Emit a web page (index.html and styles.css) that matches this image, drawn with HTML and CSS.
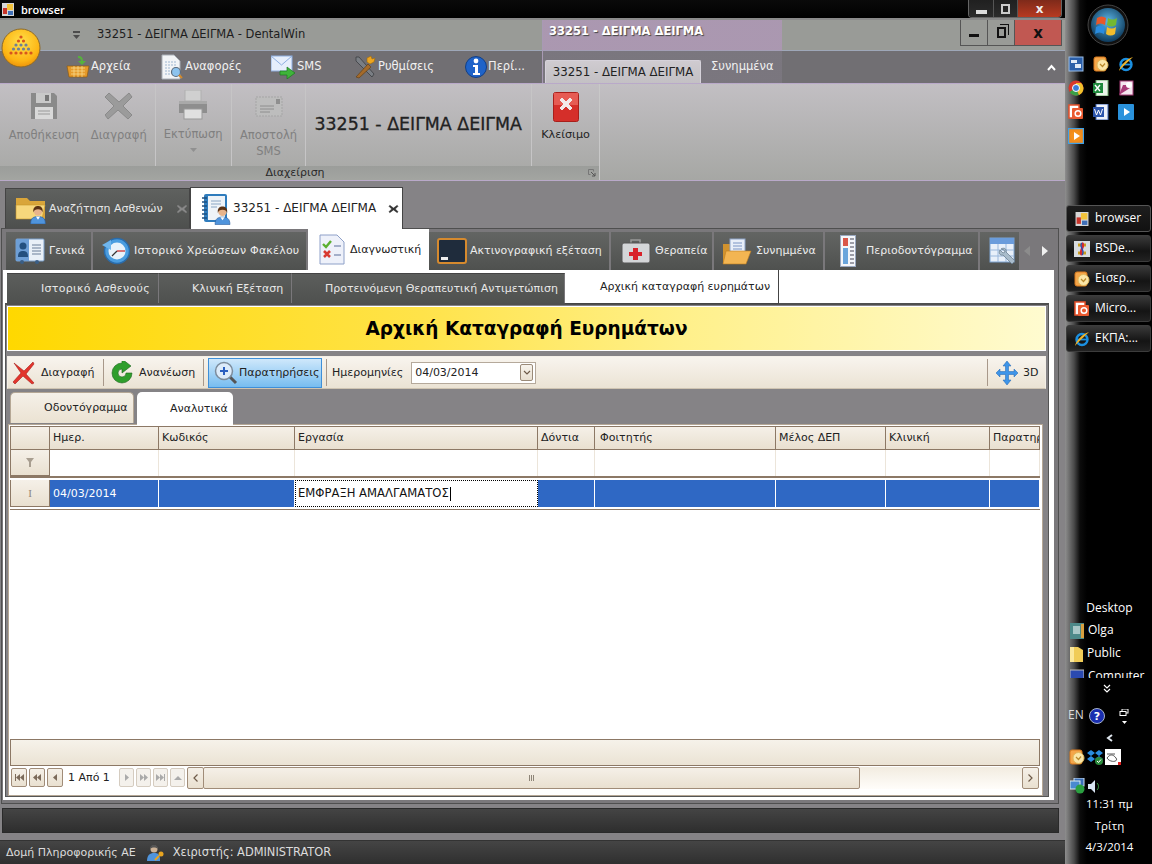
FILE: index.html
```html
<!DOCTYPE html>
<html lang="el">
<head>
<meta charset="utf-8">
<title>browser</title>
<link rel="stylesheet" href="styles.css">
</head>
<body>
<svg class="defs" width="0" height="0">
  <symbol id="person" viewBox="0 0 16 18"><path d="M1 18c0-6 3-7 7-7s7 1 7 7z" fill="#4f94dc" stroke="#2a5f9f" stroke-width=".6"/><path d="M6 11l2 3 2-3z" fill="#fff"/><circle cx="8" cy="6" r="4" fill="#e8b48c"/><path d="M3.600 7C3 2 6 1 8 1s5 1 4.400 6c-.6-2-2-3-4.400-3S4.200 5 3.600 7z" fill="#5a3214"/></symbol>
  <symbol id="outlook" viewBox="0 0 16 16"><rect x="1" y="1" width="12" height="14" rx="2" fill="#f5a64a" stroke="#d87b1e"/><circle cx="9.500" cy="9" r="5.500" fill="#fbe6a8" stroke="#e0b95c"/><path d="M7 8l2.500 2.500L12 7.500" fill="none" stroke="#b98a2c" stroke-width="1.200"/></symbol>
  <symbol id="ie" viewBox="0 0 16 16"><ellipse cx="8" cy="8.500" rx="5.500" ry="5.500" fill="none" stroke="#1b8fe0" stroke-width="2.400"/><path d="M3 8.500h10" stroke="#1b8fe0" stroke-width="1.800"/><path d="M1 15C2 10 8 3 15 1c-3 3-9 8-14 14z" fill="#f0b429"/></symbol>
  <symbol id="ppt" viewBox="0 0 16 16"><rect x="1" y="1" width="10" height="13" fill="#fff" stroke="#e8502a" stroke-width="1.500"/><rect x="4" y="4" width="11" height="11" rx="1" fill="#ea5a30"/><circle cx="10" cy="9.500" r="2.800" fill="none" stroke="#fff" stroke-width="1.500"/></symbol>
  <symbol id="gearlink" viewBox="0 0 16 16"><rect x="1" y="1" width="14" height="14" fill="#2a5ea8" stroke="#9cc0ea"/><rect x="3" y="4" width="6" height="3" fill="#dfe8f5"/><rect x="7" y="8" width="6" height="4" fill="#dfe8f5"/></symbol>
</svg>
<div class="screen">
  <div class="app">
    <svg class="logo" width="40" height="40" viewBox="0 0 40 40"><defs><radialGradient id="lg" cx=".5" cy=".35" r=".7"><stop offset="0" stop-color="#ffe04a"/><stop offset=".7" stop-color="#fdb514"/><stop offset="1" stop-color="#e98a08"/></radialGradient></defs><circle cx="20" cy="20" r="19" fill="url(#lg)" stroke="#8c6a2a"/><g fill="#d8541c"><circle cx="20" cy="9" r="1.600"/><circle cx="17.500" cy="13" r="1.600"/><circle cx="22.500" cy="13" r="1.600"/></g><g fill="#6f7f96"><circle cx="15" cy="17" r="1.600"/><circle cx="20" cy="17" r="1.600"/><circle cx="25" cy="17" r="1.600"/><circle cx="12.500" cy="21" r="1.600"/><circle cx="17.500" cy="21" r="1.600"/><circle cx="22.500" cy="21" r="1.600"/><circle cx="27.500" cy="21" r="1.600"/></g><g fill="#d8541c"><circle cx="10" cy="25" r="1.600"/><circle cx="15" cy="25" r="1.600"/><circle cx="20" cy="25" r="1.600"/><circle cx="25" cy="25" r="1.600"/><circle cx="30" cy="25" r="1.600"/></g></svg>
    <div class="aero">
      <svg class="winicon" width="12" height="13" viewBox="0 0 12 13"><rect width="12" height="13" fill="#d6d6d6"/><rect x="1" y="5" width="4" height="6" fill="#c8342a"/><rect x="5" y="1" width="6" height="6" fill="#f2c23a"/><rect x="6" y="8" width="5" height="4" fill="#3f6fb8"/></svg>
      <span class="aero-title">browser</span>
      <div class="aero-btns">
        <span class="ab ab-min"><i></i></span><span class="ab ab-max"><i></i></span><span class="ab ab-close">x</span>
      </div>
    </div>
    <div class="qat">
      <svg class="qat-drop" width="9" height="10" viewBox="0 0 9 10"><rect x="1" y="1" width="7" height="2" fill="#4c4c4c"/><path d="M1 5h7L4.500 9z" fill="#4c4c4c"/></svg>
      <span class="qat-title">33251 - ΔΕΙΓΜΑ ΔΕΙΓΜΑ - DentalWin</span>
      <div class="win-btns">
        <span class="wb"><i class="wb-min"></i></span>
        <span class="wb"><i class="wb-max"></i></span>
        <span class="wb wb-close">x</span>
      </div>
    </div>
    <div class="menu">
      <div class="mt mt-a">
        <svg width="24" height="24" viewBox="0 0 24 24"><path d="M12 1c4 0 5 2 5 5h3l-4 4-4-4h3c0-2-1-3-3-3z" fill="#57b13d"/><path d="M1 11h22l-2 11H3z" fill="#e59a2a" stroke="#8f5c12" stroke-width=".7"/><path d="M5 13h14M5 16h14M5 19h14M8 11v11M12 11v11M16 11v11" stroke="#f8d98c" stroke-width=".8"/></svg>
        <span>Αρχεία</span>
      </div>
      <div class="mt mt-b">
        <svg width="24" height="26" viewBox="0 0 24 26"><path d="M2 1h12l6 6v18H2z" fill="#f2f4f6" stroke="#aab0b8"/><path d="M5 8h11M5 11h11M5 14h6M5 17h6M5 20h6" stroke="#9db5cf" stroke-width="1.200" stroke-dasharray="2 1"/><circle cx="16" cy="18" r="4.500" fill="#8cc3ee" stroke="#5c6c7c" stroke-width="1.200"/><path d="M19 21l3 3" stroke="#d48a2a" stroke-width="2"/></svg>
        <span>Αναφορές</span>
      </div>
      <div class="mt mt-c">
        <svg width="25" height="24" viewBox="0 0 25 24"><rect x="0" y="1" width="21" height="15" fill="#e6eefb" stroke="#8eaee0"/><path d="M0 1l10.500 9L21 1" fill="none" stroke="#8eaee0"/><path d="M9 16h7v-4l8 6-8 6v-4H9z" fill="#3fb43a" stroke="#1d7a20" stroke-width=".7"/></svg>
        <span>SMS</span>
      </div>
      <div class="mt mt-d">
        <svg width="24" height="24" viewBox="0 0 24 24"><path d="M3 2l3 0 15 17-2 3L3 6z" fill="#7a7e84" stroke="#33363a" stroke-width=".7"/><path d="M3 22L15 9l3 3L6 23z" fill="#a46a2a" stroke="#5e3a10" stroke-width=".6"/><path d="M14 3l4-2 1 3 3-1-1 4-4 2-3-2z" fill="#eda520" stroke="#9c6a10" stroke-width=".6"/></svg>
        <span>Ρυθμίσεις</span>
      </div>
      <div class="mt mt-e">
        <svg width="22" height="24" viewBox="0 0 22 24"><circle cx="11" cy="12" r="10.500" fill="#1f63c8" stroke="#123f86"/><circle cx="11" cy="6" r="2.400" fill="#fff"/><path d="M8 10h5v8h2v2H8v-2h2v-6H8z" fill="#fff"/></svg>
        <span>Περί...</span>
      </div>
      <div class="mt-active">33251 - ΔΕΙΓΜΑ ΔΕΙΓΜΑ</div>
      <div class="mt-att">Συνημμένα</div>
      <svg class="collapse" width="9" height="7" viewBox="0 0 9 7"><path d="M1 6l3.500-4L8 6" fill="none" stroke="#fff" stroke-width="2"/></svg>
    </div>
    <div class="context-tab"><span>33251 - ΔΕΙΓΜΑ ΔΕΙΓΜΑ</span></div>
    <div class="ribbon">
      <div class="rb-group">
        <div class="rb-items">
          <div class="rb rb-save">
            <svg width="28" height="28" viewBox="0 0 28 28"><path d="M1 1h23l3 3v23H1z" fill="#8a8a8a"/><rect x="6" y="1" width="15" height="10" fill="#c9c9c9"/><rect x="15" y="3" width="4" height="6" fill="#777"/><rect x="5" y="15" width="18" height="12" fill="#d9d9d9"/><path d="M8 19h12M8 22h12" stroke="#999"/></svg>
            <span>Αποθήκευση</span>
          </div>
          <div class="rb rb-del sep">
            <svg width="28" height="28" viewBox="0 0 28 28"><path d="M4 1l10 9L24 1l3 4-9 9 9 9-4 4-10-9-10 9-3-4 9-9-9-9z" fill="#9b9b9b" stroke="#8a8a8a"/></svg>
            <span>Διαγραφή</span>
          </div>
          <div class="rb rb-print sep">
            <svg width="30" height="30" viewBox="0 0 30 30"><rect x="7" y="0" width="16" height="11" fill="#d0d0d0" stroke="#b0b0b0"/><path d="M1 11h28v12H1z" fill="#8e8e8e"/><rect x="1" y="11" width="28" height="3" fill="#a9a9a9"/><rect x="6" y="19" width="18" height="10" fill="#e0e0e0" stroke="#999"/></svg>
            <span>Εκτύπωση</span>
            <svg class="drop" width="7" height="4" viewBox="0 0 7 4"><path d="M0 0h7L3.500 4z" fill="#909090"/></svg>
          </div>
          <div class="rb rb-sms sep">
            <svg width="28" height="28" viewBox="0 0 28 28"><rect x="1" y="5" width="26" height="19" fill="#bdbdbd" stroke="#a5a5a5" stroke-dasharray="2 1"/><rect x="21" y="7" width="4" height="5" fill="#8f8f8f"/><path d="M5 14h14M5 17h14M5 20h10" stroke="#8e8e8e"/></svg>
            <span>Αποστολή<br>SMS</span>
          </div>
          <div class="rb-name sep">33251 - ΔΕΙΓΜΑ ΔΕΙΓΜΑ</div>
          <div class="rb rb-close sep">
            <svg width="26" height="30" viewBox="0 0 26 30"><rect x=".5" y=".5" width="25" height="29" rx="2" fill="#d52f2a" stroke="#a81f1b"/><rect x="1" y="1" width="24" height="12" fill="#e65b53"/><path d="M7 8l2-2 4 4 4-4 2 2-4 4 4 4-2 2-4-4-4 4-2-2 4-4z" fill="#f2eaea" stroke="#f2eaea"/></svg>
            <span>Κλείσιμο</span>
          </div>
        </div>
        <div class="rb-foot">
          <span>Διαχείριση</span>
          <svg class="launcher" width="8" height="8" viewBox="0 0 8 8"><path d="M.5.500h5v2M.5.500v5h2" fill="none" stroke="#777"/><path d="M3 3l4 4M7 4v3H4" fill="none" stroke="#555"/></svg>
        </div>
      </div>
    </div>
    <div class="work">
      <div class="doc-tabs">
        <div class="dt dt-search">
          <svg class="ic-folderp" width="32" height="30" viewBox="0 0 32 30"><path d="M1 4h11l3 3h15v18H1z" fill="#d9a53a"/><path d="M1 11h29l-3 14H1z" fill="#f7d77c" stroke="#c8962a" stroke-width=".6"/><use href="#person" x="14" y="11" width="18" height="19"/></svg>
          <span>Αναζήτηση Ασθενών</span>
          <svg class="dt-x" width="12" height="10" viewBox="0 0 12 10"><path d="M2 1l4 3 4-3 1 1-3 3 3 3-1 1-4-3-4 3-1-1 3-3-3-3z" fill="#8a8a8a" stroke="#777" stroke-width=".5"/></svg>
        </div>
        <div class="dt dt-active">
          <svg class="ic-bookp" width="30" height="32" viewBox="0 0 30 32"><rect x="3" y="1" width="23" height="28" rx="2" fill="#2f7cbd"/><rect x="7" y="3" width="17" height="24" fill="#eef3f8"/><path d="M10 8h10M10 11h10M10 14h6" stroke="#8aa6c4"/><path d="M1 5h5M1 9h5M1 13h5M1 17h5M1 21h5M1 25h5" stroke="#1c4f80" stroke-width="1.400"/><use href="#person" x="13" y="12" width="17" height="20"/></svg>
          <span>33251 - ΔΕΙΓΜΑ ΔΕΙΓΜΑ</span>
          <svg class="dt-x" width="11" height="10" viewBox="0 0 12 10"><path d="M2 1l4 3 4-3 1 1-3 3 3 3-1 1-4-3-4 3-1-1 3-3-3-3z" fill="#333" stroke="#333" stroke-width=".5"/></svg>
        </div>
      </div>
      <div class="doc-panel">
        <div class="page-tabs">
          <div class="pt pt-1">
            <svg width="30" height="28" viewBox="0 0 30 28"><rect x="1" y="2" width="28" height="22" rx="1" fill="#e9f0f8" stroke="#7aa0cc"/><rect x="1" y="2" width="13" height="22" fill="#6e9fd6"/><circle cx="8" cy="9" r="3.500" fill="#24507f"/><path d="M3 20c0-5 2-6 5-6s5 1 5 6z" fill="#24507f"/><path d="M17 8h9M17 11h9M17 14h9M17 17h9" stroke="#6a7f99"/><circle cx="7" cy="25" r="2" fill="#3a5e85"/><circle cx="22" cy="25" r="2" fill="#3a5e85"/></svg>
            <span>Γενικά</span>
          </div>
          <div class="pt pt-2">
            <svg width="28" height="30" viewBox="0 0 28 30"><circle cx="15" cy="15" r="12.500" fill="#4a9de0" stroke="#2a6cab" stroke-width="1.500"/><circle cx="15" cy="15" r="8.500" fill="#e8f2fa"/><path d="M15 15l-5 5" stroke="#333" stroke-width="1.200"/><path d="M15 15h8" stroke="#c22" stroke-width="1.200"/><path d="M0 9l9-5v10z" fill="#6fb6ee"/></svg>
            <span>Ιστορικό Χρεώσεων Φακέλου</span>
          </div>
          <div class="pt pt-3">
            <svg width="26" height="31" viewBox="0 0 26 31"><path d="M1 1h17l7 7v22H1z" fill="#eef1fa" stroke="#8ea0c8"/><path d="M4 10l3 3 5-6" fill="none" stroke="#5cb032" stroke-width="2.400"/><path d="M5 17l6 6M11 17l-6 6" stroke="#d83a32" stroke-width="2.600"/><path d="M15 12h7M15 21h7" stroke="#5a6f9a" stroke-width="1.200"/></svg>
            <span>Διαγνωστική</span>
          </div>
          <div class="pt pt-4">
            <svg width="30" height="26" viewBox="0 0 30 26"><rect x="1" y="1" width="28" height="24" rx="2" fill="#1f2c3c" stroke="#d68a2e" stroke-width="2"/><rect x="4" y="19" width="7" height="3" fill="#eee"/></svg>
            <span>Ακτινογραφική εξέταση</span>
          </div>
          <div class="pt pt-5">
            <svg width="30" height="27" viewBox="0 0 30 27"><path d="M10 5V2h9v3" fill="none" stroke="#999" stroke-width="1.500"/><rect x="1" y="5" width="28" height="20" rx="2" fill="#d4d6d8" stroke="#555"/><path d="M12 10h5v4h4v4h-4v4h-5v-4H8v-4h4z" fill="#d8222a"/></svg>
            <span>Θεραπεία</span>
          </div>
          <div class="pt pt-6">
            <svg width="30" height="27" viewBox="0 0 30 27"><path d="M1 6h7l2 3h12v16H1z" fill="#d1922e"/><rect x="8" y="1" width="15" height="15" fill="#e8eef8" stroke="#8ea4c8"/><path d="M11 5h9M11 8h9M11 11h9" stroke="#7a94c4"/><path d="M4 13h25l-5 13H1z" fill="#f3b552" stroke="#bf7e1e" stroke-width=".6"/></svg>
            <span>Συνημμένα</span>
          </div>
          <div class="pt pt-7">
            <svg width="16" height="32" viewBox="0 0 16 32"><rect x=".5" y=".5" width="15" height="31" fill="#f4f6fa" stroke="#9aa8c0"/><rect x="3" y="3" width="5" height="8" fill="#d9574a"/><rect x="3" y="13" width="5" height="16" fill="#6aa5dc"/><path d="M10 4h4M10 8h4M10 12h4M10 16h4M10 20h4M10 24h4M10 28h4" stroke="#445"/></svg>
            <span>Περιοδοντόγραμμα</span>
          </div>
          <div class="pt pt-8">
            <svg width="28" height="29" viewBox="0 0 28 29"><rect x="1" y="1" width="24" height="24" fill="#e8f0fa" stroke="#7da4d2"/><rect x="1" y="1" width="24" height="6" fill="#6a9cdc"/><path d="M1 13h24M1 19h24M9 7v18M17 7v18" stroke="#9ab8dc"/><path d="M12 12c3-2 6 0 5 3l9 9-3 3-9-9c-3 1-5-2-3-5l3 3 2-1-1-2z" fill="#a9bccb" stroke="#63788a" stroke-width=".7"/></svg>
          </div>
          <div class="pt-arrows">
            <svg width="6" height="10" viewBox="0 0 6 10"><path d="M6 0v10L0 5z" fill="#8c8c8c"/></svg>
            <svg width="6" height="10" viewBox="0 0 6 10"><path d="M0 0v10l6-5z" fill="#f0f0f0"/></svg>
          </div>
        </div>
        <div class="page">
          <div class="sub-tabs">
            <div class="st st-1">Ιστορικό Ασθενούς</div>
            <div class="st st-2">Κλινική Εξέταση</div>
            <div class="st st-3">Προτεινόμενη Θεραπευτική Αντιμετώπιση</div>
            <div class="st-active">Αρχική καταγραφή ευρημάτων</div>
          </div>
          <div class="frame">
            <div class="banner">Αρχική Καταγραφή Ευρημάτων</div>
            <div class="toolbar">
              <div class="tb tb-del">
                <svg width="24" height="24" viewBox="0 0 24 24"><path d="M2 2l10 8 9-9 1 2-8 10 8 9-2 1-9-8-8 8-2-2 8-9z" fill="#e2342c" stroke="#a81d18" stroke-width=".6"/></svg>
                <span>Διαγραφή</span>
              </div>
              <i class="tb-sep"></i>
              <div class="tb tb-ref">
                <svg width="24" height="24" viewBox="0 0 24 24"><path d="M12 2a10 10 0 1 0 10 10h-6a4 4 0 1 1-4-4v4l9-7-9-7z" fill="#2f9e2c" stroke="#1a641c" stroke-width=".6"/></svg>
                <span>Ανανέωση</span>
              </div>
              <i class="tb-sep"></i>
              <div class="tb tb-notes">
                <svg width="24" height="24" viewBox="0 0 24 24"><path d="M15 15l7 7" stroke="#555" stroke-width="3"/><circle cx="10" cy="10" r="8.500" fill="#dcebfa" stroke="#7c8c9c" stroke-width="1.500"/><path d="M10 6v8M6 10h8" stroke="#2a5fc0" stroke-width="2"/></svg>
                <span>Παρατηρήσεις</span>
              </div>
              <i class="tb-sep tb-sep-n"></i>
              <span class="tb-label">Ημερομηνίες</span>
              <div class="combo">
                <span>04/03/2014</span>
                <b><svg width="8" height="5" viewBox="0 0 8 5"><path d="M1 1l3 3 3-3" fill="none" stroke="#6e5a48" stroke-width="1.200"/></svg></b>
              </div>
              <i class="tb-sep tb-sep-r"></i>
              <div class="tb tb-3d">
                <svg width="22" height="24" viewBox="0 0 22 24"><path d="M11 0l4 5h-2.500v5.500H18V8l4 4-4 4v-2.500h-5.500V19H15l-4 5-4-5h2.500v-5.500H4V16l-4-4 4-4v2.500h5.500V5H7z" fill="#3f95e8" stroke="#1d62b0" stroke-width=".5"/></svg>
                <span>3D</span>
              </div>
            </div>
            <div class="view-tabs">
              <div class="vt vt-1">Οδοντόγραμμα</div>
              <div class="vt vt-active">Αναλυτικά</div>
            </div>
            <div class="sheet">
              <div class="grid">
                <div class="g-row g-head">
                  <div class="g-sel"></div><div>Ημερ.</div><div>Κωδικός</div><div>Εργασία</div><div>Δόντια</div><div class="g-stud">Φοιτητής</div><div>Μέλος ΔΕΠ</div><div>Κλινική</div><div>Παρατηρ</div>
                </div>
                <div class="g-row g-filter">
                  <div class="g-sel"><svg width="8" height="9" viewBox="0 0 8 9"><path d="M0 0h8L5 4v5H3V4z" fill="#a89e90"/></svg></div><div></div><div></div><div></div><div></div><div></div><div></div><div></div><div></div>
                </div>
                <div class="g-row g-data">
                  <div class="g-sel"><span class="ibeam">I</span></div><div class="g-cell">04/03/2014</div><div class="g-cell"></div><div class="g-edit">ΕΜΦΡΑΞΗ ΑΜΑΛΓΑΜΑΤΟΣ<i></i></div><div class="g-cell"></div><div class="g-cell"></div><div class="g-cell"></div><div class="g-cell"></div><div class="g-cell"></div>
                </div>
                <div class="g-space"></div>
                <div class="g-foot"></div>
                <div class="pager">
                  <span class="pb"><svg width="9" height="7" viewBox="0 0 9 7"><path d="M0 0h1v7H0zM5 0v7L1 3.500zM9 0v7L5 3.500z" fill="#7b6a5a"/></svg></span>
                  <span class="pb"><svg width="8" height="7" viewBox="0 0 8 7"><path d="M4 0v7L0 3.500zM8 0v7L4 3.500z" fill="#7b6a5a"/></svg></span>
                  <span class="pb"><svg width="4" height="7" viewBox="0 0 4 7"><path d="M4 0v7L0 3.500z" fill="#7b6a5a"/></svg></span>
                  <span class="pg-text">1 Από 1</span>
                  <span class="pb pb-off"><svg width="4" height="7" viewBox="0 0 4 7"><path d="M0 0v7l4-3.500z" fill="#aaa"/></svg></span>
                  <span class="pb pb-off"><svg width="8" height="7" viewBox="0 0 8 7"><path d="M0 0v7l4-3.500zM4 0v7l4-3.500z" fill="#aaa"/></svg></span>
                  <span class="pb pb-off"><svg width="9" height="7" viewBox="0 0 9 7"><path d="M0 0v7l4-3.500zM4 0v7l4-3.500zM8 0h1v7H8z" fill="#aaa"/></svg></span>
                  <span class="pb pb-off"><svg width="8" height="4" viewBox="0 0 8 4"><path d="M0 4h8L4 0z" fill="#aaa"/></svg></span>
                  <span class="sb-btn"><svg width="5" height="8" viewBox="0 0 5 8"><path d="M4.500.500L1 4l3.500 3.500" fill="none" stroke="#6e5a48" stroke-width="1.200"/></svg></span>
                  <div class="sb-track">
                    <div class="sb-thumb"><svg width="5" height="6" viewBox="0 0 5 6"><path d="M.5 0v6M2.500 0v6M4.500 0v6" stroke="#8e8578"/></svg></div>
                  </div>
                  <span class="sb-btn"><svg width="5" height="8" viewBox="0 0 5 8"><path d="M.5.500L4 4 .5 7.500" fill="none" stroke="#6e5a48" stroke-width="1.200"/></svg></span>
                </div>
              </div>
            </div>
          </div>
        </div>
      </div>
      <div class="dark-bar"></div>
    </div>
    <div class="status">
      <span>Δομή Πληροφορικής ΑΕ</span>
      <svg width="18" height="18" viewBox="0 0 18 18"><circle cx="7" cy="5" r="3.500" fill="#cdb296"/><path d="M7 1c-3 0-4 2-3.500 4C4 3 10 3 10.500 5 11 2 9 1 7 1z" fill="#555"/><path d="M0 17c0-6 3-8 7-8s5 1 6 5v3z" fill="#4f94dc"/><circle cx="14" cy="10" r="2.500" fill="#e8a420"/><path d="M12 12l-4 4" stroke="#e8a420" stroke-width="2"/></svg>
      <span class="st-op">Χειριστής: ADMINISTRATOR</span>
    </div>
  </div>
  <aside class="dock">
    <svg class="orb" width="42" height="42" viewBox="0 0 42 42"><defs><radialGradient id="orbg" cx=".5" cy=".4" r=".6"><stop offset="0" stop-color="#5db8e8"/><stop offset="1" stop-color="#0e3a5c"/></radialGradient></defs><circle cx="21" cy="21" r="20" fill="#111" stroke="#444"/><circle cx="21" cy="21" r="17" fill="url(#orbg)"/><path d="M10 14c3-2 6-2 9 0l-1 7c-3-2-6-2-9 0z" fill="#e8582a"/><path d="M21 14c3 2 6 2 9 0l-1 7c-3 2-6 2-9 0z" fill="#74b832"/><path d="M9 23c3-2 6-2 9 0l-1 7c-3-2-6-2-9 0z" fill="#2a8ce0"/><path d="M20 23c3 2 6 2 9 0l-1 7c-3 2-6 2-9 0z" fill="#f2bc2c"/></svg>
    <div class="quick">
      <svg width="16" height="16"><use href="#gearlink"/></svg>
      <svg width="16" height="16"><use href="#outlook"/></svg>
      <svg width="16" height="16"><use href="#ie"/></svg>
      <svg width="16" height="16" viewBox="0 0 16 16"><circle cx="8" cy="8" r="7.500" fill="#d8382c"/><path d="M8 8L1.500 12A7.500 7.500 0 0 0 11 15z" fill="#3aa046"/><path d="M8 8l3 7A7.500 7.500 0 0 0 15.500 8 7 7 0 0 0 13 3H8z" fill="#f2c22c"/><circle cx="8" cy="8" r="3.500" fill="#3a7cd8" stroke="#fff"/></svg>
      <svg width="16" height="16" viewBox="0 0 16 16"><rect x="3" y="0" width="12" height="16" fill="#eaf5ea" stroke="#6aa86a"/><rect x="0" y="3" width="10" height="10" fill="#1d8a3c"/><path d="M2 5l5 6M7 5l-5 6" stroke="#fff" stroke-width="1.400"/></svg>
      <svg width="16" height="16" viewBox="0 0 16 16"><rect x="2" y="1" width="13" height="14" fill="#f4e6ef" stroke="#a33a74"/><path d="M1 15L5 5h5l2 3z" fill="#a83a78"/><circle cx="11" cy="5" r="3" fill="#fff"/></svg>
      <svg width="16" height="16"><use href="#ppt"/></svg>
      <svg width="16" height="16" viewBox="0 0 16 16"><rect x="3" y="0" width="12" height="16" fill="#eef2fa" stroke="#3d62b0"/><rect x="0" y="3" width="11" height="10" fill="#2c55ac"/><path d="M1.500 5l2 6 2-5 2 5 2-6" fill="none" stroke="#fff"/></svg>
      <svg width="16" height="16" viewBox="0 0 16 16"><rect width="16" height="16" rx="1" fill="#2a92dc"/><path d="M6 4v8l6-4z" fill="#fff"/></svg>
      <svg width="16" height="16" viewBox="0 0 16 16"><rect x=".5" y=".5" width="15" height="15" fill="#f08a1c" stroke="#3ea0e8" stroke-width="1.400"/><circle cx="8" cy="8" r="5.500" fill="#f4901c"/><path d="M6 4v8l6-4z" fill="#fff"/></svg>
    </div>
    <div class="tasks">
      <div class="task task-on">
        <svg width="14" height="14" viewBox="0 0 12 13"><rect width="12" height="13" fill="#d6d6d6"/><rect x="1" y="5" width="4" height="6" fill="#c8342a"/><rect x="5" y="1" width="6" height="6" fill="#f2c23a"/><rect x="6" y="8" width="5" height="4" fill="#3f6fb8"/></svg>
        <span>browser</span>
      </div>
      <div class="task">
        <svg width="16" height="16" viewBox="0 0 16 16"><rect width="16" height="16" fill="#d8dce0"/><path d="M4 4h8M4 12h8" stroke="#c8a020" stroke-width="3"/><path d="M8 2c4 3-4 8 0 12" fill="none" stroke="#d8282c" stroke-width="2.400"/><path d="M8 2c-4 3 4 8 0 12" fill="none" stroke="#2a4ab8" stroke-width="1.400"/></svg>
        <span>BSDe...</span>
      </div>
      <div class="task"><svg width="16" height="16"><use href="#outlook"/></svg><span>Εισερ...</span></div>
      <div class="task"><svg width="16" height="16"><use href="#ppt"/></svg><span>Micro...</span></div>
      <div class="task"><svg width="16" height="16"><use href="#ie"/></svg><span>ΕΚΠΑ:...</span></div>
    </div>
    <div class="places">
      <div class="pl-title">Desktop</div>
      <div class="pl-row"><svg width="14" height="16" viewBox="0 0 14 16"><rect width="14" height="16" fill="#4d8a8a"/><rect x="3" y="3" width="7" height="8" fill="#a8c8c8"/><rect x="11" y="1" width="3" height="14" fill="#d8a040"/></svg><span>Olga</span></div>
      <div class="pl-row"><svg width="13" height="16" viewBox="0 0 13 16"><path d="M0 1h8l5 3v12H0z" fill="#f0cc58"/><path d="M0 1h4v15H0z" fill="#fbe89c"/></svg><span>Public</span></div>
      <div class="pl-row"><svg width="14" height="16" viewBox="0 0 14 16"><rect y="1" width="14" height="10" fill="#2a4ab0" stroke="#bbb"/></svg><span>Computer</span></div>
    </div>
    <svg class="more" width="8" height="9" viewBox="0 0 8 9"><path d="M1 1l3 3 3-3M1 5l3 3 3-3" fill="none" stroke="#fff" stroke-width="1.200"/></svg>
    <div class="lang">
      <span class="en">EN</span>
      <svg width="16" height="16" viewBox="0 0 16 16"><circle cx="8" cy="8" r="7.500" fill="#1a2fb0" stroke="#a8b4c8"/><text x="8" y="12" text-anchor="middle" class="q">?</text></svg>
      <svg class="restore" width="10" height="16" viewBox="0 0 10 16"><rect x="3" y="0" width="6" height="4" fill="none" stroke="#fff"/><rect x="1" y="2.500" width="6" height="4" fill="#000" stroke="#fff"/><path d="M3 12h5l-2.500 3z" fill="#fff"/></svg>
    </div>
    <svg class="arrow" width="7" height="8" viewBox="0 0 7 8"><path d="M6 1L2 4l4 3" fill="none" stroke="#dfe6ee" stroke-width="2"/></svg>
    <div class="tray1">
      <svg width="16" height="16"><use href="#outlook"/></svg>
      <svg width="16" height="16" viewBox="0 0 16 16"><path d="M4 1l4 3-4 3-4-3zM12 1l4 3-4 3-4-3zM4 7l4 3-4 3-4-3zM12 7l4 3-4 3-4-3z" fill="#2a8ce0"/><circle cx="12" cy="12" r="4" fill="#2a8a3c"/><path d="M10 12l1.500 1.500L14 10.500" fill="none" stroke="#fff"/></svg>
      <svg width="16" height="16" viewBox="0 0 16 16"><rect width="16" height="16" fill="#fff"/><path d="M2 5h8M2 9c3-4 6-4 9 0s-6 5-9 0z" fill="none" stroke="#555"/><rect x="13" y="13" width="3" height="3" fill="#d22"/></svg>
    </div>
    <div class="tray2">
      <svg width="15" height="16" viewBox="0 0 15 16"><rect x="4" y="0" width="10" height="8" fill="#3a6fb8" stroke="#cde"/><rect x="0" y="3" width="10" height="8" fill="#4a8ad0" stroke="#dee"/><circle cx="10" cy="11" r="4.500" fill="#2aa040"/></svg>
      <svg width="13" height="13" viewBox="0 0 13 13"><path d="M0 4h3l4-4v13l-4-4H0z" fill="#d8e4f2"/><path d="M9 3c2 2 2 5 0 7" fill="none" stroke="#3aa046"/></svg>
    </div>
    <div class="clock">11:31 πμ</div>
    <div class="clock day">Τρίτη</div>
    <div class="clock date">4/3/2014</div>
  </aside>
</div>
</body>
</html>
```
FILE: styles.css
```css
* { box-sizing: border-box; }
html, body { margin: 0; padding: 0; }
body { width: 1152px; height: 864px; overflow: hidden; background: #000; font: 11px/1.2 "DejaVu Sans", sans-serif; color: #222; }
svg { display: block; flex: none; }
.defs { position: absolute; }
.screen { display: flex; width: 1152px; height: 864px; }

/* window */
.app { position: relative; width: 1065px; height: 864px; display: flex; flex-direction: column; background: #858386; }
.logo { position: absolute; left: 1px; top: 28px; z-index: 3; }
.aero { height: 20px; flex: none; display: flex; align-items: flex-start; background: linear-gradient(#0a0a0a, #000); border-bottom: 2px solid #8a8a8a; padding: 3px 3px 0 2px; position: relative; }
.winicon { margin-right: 7px; }
.aero-title { color: #fff; font: 11px/13px "Open Sans", sans-serif; font-weight: 600; }
.aero-btns { position: absolute; right: 3px; top: 0; height: 18px; width: 94px; display: flex; border: 1px solid #666; border-top: 0; border-radius: 0 0 4px 4px; overflow: hidden; }
.ab { display: flex; align-items: center; justify-content: center; height: 100%; color: #eee; font: bold 12px "DejaVu Sans", sans-serif; border-right: 1px solid #555; background: linear-gradient(#202020, #2c2c2c); }
.ab-min { width: 25px; } .ab-max { width: 24px; }
.ab-min i { width: 11px; height: 4px; background: #ddd; margin-top: 6px; }
.ab-max i { width: 9px; height: 10px; border: 2px solid #ccc; }
.ab-close { flex: 1; border: 0; background: linear-gradient(#7e2a1a, #b73a20); }

.qat { height: 31px; flex: none; display: flex; align-items: center; background: #999b97; border-bottom: 1px solid #9ea7b8; padding-left: 72px; position: relative; }
.qat-title { margin-left: 16px; color: #1d1d1d; font-size: 11.500px; white-space: nowrap; }
.win-btns { position: absolute; right: 3px; top: 0; display: flex; height: 26px; border: 1px solid #555; border-top: 0; z-index: 2; }
.wb { width: 27px; display: flex; align-items: center; justify-content: center; border-right: 1px solid #555; font: bold 15px "DejaVu Sans", sans-serif; color: #111; background: #999b97; }
.wb-close { width: 46px; border: 0; background: #c15852; }
.wb-min { width: 10px; height: 3px; background: #111; margin-top: 6px; }
.wb-max { width: 9px; height: 11px; border: 2px solid #111; box-shadow: 2px -2px 0 0 #999b97, 3px -3px 0 0 #111; }

.menu { height: 32px; flex: none; position: relative; display: flex; align-items: center; background: #716f73; padding-left: 66px; color: #f1f1f1; font-size: 11.500px; }
.mt { display: flex; align-items: center; gap: 1px; flex: none; }
.mt-a { width: 94px; } .mt-b { width: 111px; } .mt-c { width: 82px; } .mt-d { width: 112px; } .mt-e { width: 80px; }
.mt-active { height: 23px; margin-top: 9px; width: 156px; display: flex; align-items: center; justify-content: center; background: linear-gradient(#cfcbd0, #c3c0c4); border: 1px solid #d6d2da; border-bottom: 0; border-radius: 2px 2px 0 0; color: #222; font-size: 11.800px; white-space: nowrap; position: relative; z-index: 2; }
.mt-att { margin-left: 10px; font-size: 11.500px; position: relative; z-index: 2; }
.collapse { position: absolute; right: 9px; top: 13px; z-index: 2; }
.context-tab { position: absolute; left: 542px; top: 20px; width: 240px; height: 63px; background: linear-gradient(rgba(180,150,190,.65) 0, rgba(180,150,190,.65) 30px, rgba(150,140,160,.25) 31px); border-left: 1px solid #a89ab4; padding: 4px 0 0 6px; z-index: 1; }
.context-tab span { color: #fff; font: bold 11.500px/15px "DejaVu Sans", sans-serif; text-shadow: 1px 1px 1px #444; }

.ribbon { height: 98px; flex: none; background: linear-gradient(#c2bfc3, #a6a7a4); border-top: 1px solid #b9a9c9; border-bottom: 1px solid #b9a9c9; display: flex; }
.rb-group { width: 600px; display: flex; flex-direction: column; border-right: 1px solid #c8c8c8; }
.rb-items { height: 82px; display: flex; flex: none; }
.rb { display: flex; flex-direction: column; align-items: center; padding-top: 8px; color: #808080; text-align: center; line-height: 16px; font-size: 11.500px; }
.rb > span { margin-top: 7px; }
.sep { border-left: 1px solid #c6c5c6; margin: 0; }
.rb-save { width: 83px; padding-left: 5px; }
.rb-del { width: 72px; border-left: 0; padding-top: 8px; }
.rb-print { width: 76px; padding-top: 6px; }
.rb-print > span { margin-top: 6px; }
.drop { margin-top: 6px; }
.rb-sms { width: 75px; }
.rb-name { width: 226px; font-size: 17.400px; color: #222; padding: 30px 0 0 8px; -webkit-text-stroke: .3px #222; white-space: nowrap; }
.rb-close { width: 68px; color: #222; padding-top: 8px; font-size: 11.200px; }
.rb-close > span { margin-top: 5px; }
.rb-foot { flex: 1; position: relative; display: flex; align-items: center; justify-content: center; background: linear-gradient(#9b9d9a, #a3a5a1); color: #2a2a2a; font-size: 11px; padding-right: 9px; }
.launcher { position: absolute; right: 3px; bottom: 3px; }

/* work area */
.work { flex: 1; display: flex; flex-direction: column; background: #858386; padding-top: 5px; min-height: 0; }
.doc-tabs { height: 42px; flex: none; display: flex; align-items: flex-end; padding-left: 5px; }
.dt { display: flex; align-items: center; height: 40px; color: #e6e6e6; }
.dt-search { width: 185px; background: linear-gradient(#5f615f, #4e504e); border: 1px solid #444; border-bottom: 0; padding-left: 9px; gap: 2px; }
.dt-search .dt-x { margin-left: 11px; }
.dt-active { width: 213px; height: 42px; background: #fff; color: #222; border: 1px solid #444; border-bottom: 0; padding-left: 10px; gap: 2px; font-size: 12px; white-space: nowrap; position: relative; z-index: 1; margin-bottom: -1px; }
.dt-active .dt-x { margin-left: 10px; }
.doc-panel { flex: 1; min-height: 0; margin: 0 6px 0 1px; background: #7a787b; border: 1px solid #4f4f4f; padding: 0 4px 3px 1px; display: flex; flex-direction: column; }
.page-tabs { height: 41px; flex: none; display: flex; align-items: flex-end; padding-left: 3px; }
.pt { height: 38px; flex: none; display: flex; align-items: center; background: linear-gradient(#636563, #4f514f); color: #ececec; border-right: 2px solid #7a787b; gap: 4px; font-size: 11px; white-space: nowrap; }
.pt-1 { width: 87px; padding-left: 9px; }
.pt-2 { width: 215px; padding-left: 9px; letter-spacing: .2px; }
.pt-3 { width: 121px; height: 41px; background: #fff; color: #222; padding-left: 11px; border: 0; gap: 5px; font-size: 11px; position: relative; z-index: 1; }
.pt-4 { width: 182px; padding-left: 8px; gap: 3px; }
.pt-5 { width: 103px; padding-left: 10px; }
.pt-6 { width: 111px; padding-left: 8px; }
.pt-7 { width: 155px; padding-left: 15px; gap: 10px; }
.pt-8 { width: 39px; padding-left: 9px; border: 0; }
.pt-arrows { width: 34px; height: 38px; display: flex; align-items: center; justify-content: center; gap: 12px; }
.page { flex: 1; min-height: 0; background: #fff; margin-right: 0; padding: 0 5px 3px 2px; display: flex; flex-direction: column; }
.sub-tabs { height: 33px; flex: none; display: flex; padding-left: 2px; align-items: flex-end; }
.st { height: 30px; flex: none; display: flex; align-items: center; background: linear-gradient(#5c5e5c, #4f514f); color: #e8e8e8; border-right: 1px solid #7a787b; border-top: 1px solid #444; white-space: nowrap; }
.st-1 { width: 152px; padding-left: 34px; letter-spacing: .3px; }
.st-2 { width: 133px; padding-left: 33px; }
.st-3 { width: 273px; padding-left: 33px; }
.st-active { width: 214px; height: 34px; display: flex; align-items: center; padding-left: 35px; background: #fff; border-right: 1px solid #444; border-bottom: 1px solid #444; margin-bottom: -1px; position: relative; z-index: 1; white-space: nowrap; }
.frame { flex: 1; min-height: 0; background: #858386; border: 1px solid #555; border-top: 2px solid #4f4f4f; padding: 1px 2px 0 1px; display: flex; flex-direction: column; }
.banner { height: 45px; flex: none; margin-bottom: 5px; display: flex; align-items: center; justify-content: center; background: linear-gradient(90deg, #ffd800, #ffe34a 40%, #fff08a 65%, #fffbd0); border: 1px solid #fff; font: bold 18.500px "DejaVu Sans", sans-serif; color: #000; }
.toolbar { height: 33px; flex: none; display: flex; align-items: center; background: linear-gradient(#f8f4ee, #ebe3d4); border: 1px solid #f4efe7; border-bottom-color: #cfc4b2; padding-left: 4px; color: #222; }
.tb { display: flex; align-items: center; gap: 5px; height: 100%; flex: none; }
.tb-del { width: 85px; }
.tb-ref { width: 87px; }
.tb-notes { width: 114px; height: 30px; padding-left: 5px; gap: 1px; background: linear-gradient(#cfe8fb, #77bdf0); border: 1px solid #3f8fd8; margin-left: -2px; }
.tb-sep { width: 1px; height: 27px; background: #a8988a; margin: 0 6px; flex: none; }
.tb-sep-n { margin: 0 5px 0 4px; }
.tb-label { margin-right: 8px; white-space: nowrap; }
.combo { width: 125px; height: 22px; display: flex; align-items: center; justify-content: space-between; background: #fff; border: 1px solid #b5a99b; padding: 0 2px 0 3px; }
.combo b { width: 13px; height: 17px; display: flex; align-items: center; justify-content: center; border: 1px solid #9a8a78; border-radius: 2px; background: linear-gradient(#f7f3ec, #e8dfd0); }
.tb-sep-r { margin: 0 8px 0 auto; }
.tb-3d { width: 49px; gap: 5px; }
.view-tabs { height: 35px; flex: none; display: flex; align-items: flex-end; gap: 3px; padding-left: 3px; }
.vt { height: 31px; display: flex; align-items: center; border-radius: 5px 5px 0 0; }
.vt-1 { width: 124px; padding-left: 33px; background: linear-gradient(#f5f0e8, #ebe2d2); border: 1px solid #b5a795; border-bottom: 0; margin-bottom: 1px; }
.vt-active { width: 96px; height: 33px; padding-left: 33px; background: #fff; position: relative; z-index: 1; margin-bottom: -1px; }
.sheet { flex: 1; min-height: 0; background: #fff; margin: 0 3px 0 1px; border: 1px solid #b5a795; padding: 1px 2px 6px 1px; }
.grid { height: 100%; display: flex; flex-direction: column; border-top: 1px solid #8c7865; }
.g-row { flex: none; display: grid; grid-template-columns: 40px 109px 136px 243px 57px 181px 110px 104px 1fr; overflow: hidden; }
.g-row > div { display: flex; align-items: center; padding-left: 3px; border-right: 1px solid #ece5da; white-space: nowrap; overflow: hidden; }
.g-row > .g-sel { justify-content: center; padding: 0; background: linear-gradient(#f5f0e8, #e9e0d0); border-right: 1px solid #8c7865; border-left: 1px solid #8c7865; border-bottom: 1px solid #8c7865; }
.g-head { height: 23px; }
.g-row.g-head > div { background: linear-gradient(#f5f0e8, #e9e0d0); border-right: 1px solid #8c7865; border-bottom: 1px solid #8c7865; }
.g-row.g-head > .g-stud { padding-left: 5px; }
.g-filter { height: 27px; border-bottom: 1px solid #8c7865; }
.g-data { height: 33px; padding: 2px 0; border-top: 1px solid #8c7865; border-bottom: 1px solid #8c7865; }
.g-row > .g-cell { background: #2f68c4; color: #fff; border-right-color: #fff; }
.g-row > .g-edit { background: #fff; color: #111; border: 1px dotted #000; padding-left: 2px; font-size: 11.600px; }
.g-edit i { width: 1px; height: 14px; background: #000; margin-left: 1px; flex: none; }
.ibeam { color: #8e8578; font: 11px "Liberation Serif", serif; }
.g-space { flex: 1; min-height: 0; }
.g-foot { height: 27px; flex: none; background: linear-gradient(#f6f2ea, #ebe3d4); border: 1px solid #8c7865; }
.pager { height: 23px; flex: none; display: flex; align-items: center; padding: 0 1px; gap: 2px; }
.pb { width: 16px; height: 19px; flex: none; display: flex; align-items: center; justify-content: center; border: 1px solid #a08c78; border-radius: 2px; background: linear-gradient(#f5f0e8, #e9e0d0); }
.pb-off { width: 15px; background: #f4f1ec; border-color: #d5ccc0; }
.pg-text { width: 52px; flex: none; padding-left: 3px; font-size: 11px; white-space: nowrap; }
.sb-btn { width: 17px; height: 22px; flex: none; display: flex; align-items: center; justify-content: center; border: 1px solid #a08c78; border-radius: 2px; background: linear-gradient(#f5f0e8, #e9e0d0); }
.sb-track { flex: 1; height: 22px; background: linear-gradient(#f2ece0, #fffdfa); margin: 0 -2px 0 -3px; }
.sb-thumb { width: 657px; height: 22px; display: flex; align-items: center; justify-content: center; border: 1px solid #a08c78; border-radius: 2px; background: linear-gradient(#f5f0e8, #e9e0d0); }
.dark-bar { height: 25px; flex: none; margin: 4px 6px 7px 2px; background: linear-gradient(#444, #2e2e2e); border: 1px solid #2a2a2a; }
.status { height: 24px; flex: none; display: flex; align-items: center; gap: 5px; padding-left: 6px; background: linear-gradient(#454545, #2f2f2f); border-top: 1px solid #333; color: #dcdcdc; font-size: 11px; white-space: nowrap; }
.status svg { margin: 0 3px 0 6px; }
.st-op { font-size: 11.400px; }

/* right dock */
.dock { flex: 1; position: relative; display: flex; flex-direction: column; background: linear-gradient(90deg, #8e8e8e 0, #4a4a4a 9px, #0c0c0c 15px, #000 22px); color: #fff; font-family: "Open Sans", sans-serif; font-size: 12px; }
.orb { margin: 4px 0 0 22px; }
.quick { display: grid; grid-template-columns: repeat(3, 16px); column-gap: 9px; row-gap: 8px; margin: 10px 0 0 3px; }
.tasks { margin: 61px 0 0 1px; display: flex; flex-direction: column; gap: 3px; }
.task { width: 85px; height: 27px; display: flex; align-items: center; gap: 5px; padding-left: 7px; border: 1px solid #3c3c3c; border-radius: 3px; background: linear-gradient(#3a3a3a, #141414 60%, #222); color: #fff; font-size: 12px; }
.task-on { background: linear-gradient(#1e1e1e, #111); border-color: #555; padding-left: 8px; gap: 6px; }
.places { margin-top: 246px; height: 80px; overflow: hidden; flex: none; }
.pl-title { text-align: center; height: 21px; line-height: 19px; font-size: 12px; margin-left: 2px; }
.pl-row { display: flex; align-items: center; gap: 4px; height: 23px; padding-left: 5px; }
.more { margin: 6px 0 0 38px; }
.lang { display: flex; align-items: center; margin: 13px 0 0 3px; gap: 7px; }
.en { color: #ddd; font-size: 12px; width: 14px; }
.restore { margin: 3px 0 0 7px; }
.q { fill: #fff; font: bold 11px "DejaVu Sans", sans-serif; }
.arrow { margin: 9px 0 0 41px; }
.tray1 { display: flex; gap: 2px; margin: 7px 0 0 4px; }
.tray2 { display: flex; gap: 3px; margin: 13px 0 0 5px; align-items: center; }
.clock { text-align: center; font-size: 11.500px; line-height: 16px; margin: 2px 0 0 0; padding-left: 2px; }
.day { margin-top: 6px; }
.date { margin-top: 5px; }
```
